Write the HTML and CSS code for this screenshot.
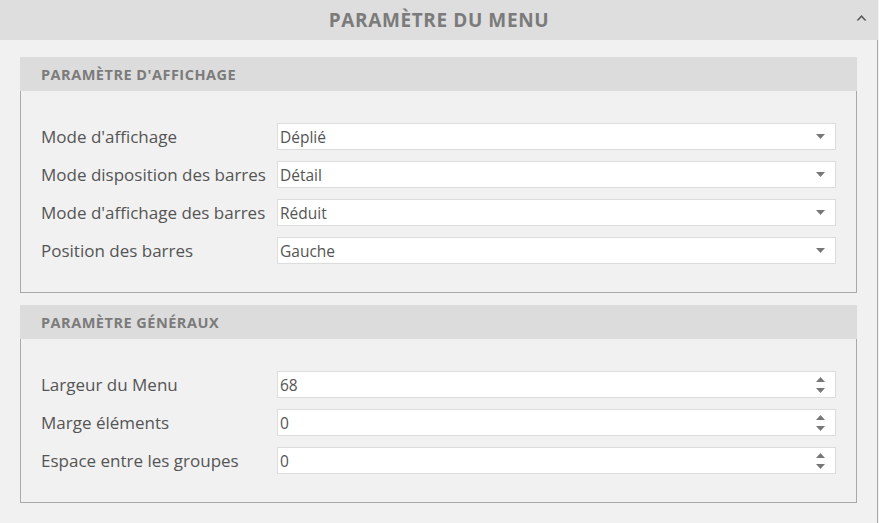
FILE: index.html
```html
<!DOCTYPE html>
<html lang="fr">
<head>
<meta charset="utf-8">
<title>Paramètre du menu</title>
<link rel="stylesheet" href="styles.css">
</head>
<body>
<div class="panel">
  <div class="panel-head">
    <h1 class="panel-title">PARAMÈTRE DU MENU</h1>
    <svg class="collapse" width="11" height="7" viewBox="0 0 11 7"><path d="M0.5 6.5 L5.5 1 L10.5 6.5 L8.5 6.5 L5.5 3.3 L2.5 6.5 Z" fill="#555"/></svg>
  </div>
  <div class="panel-body">
    <section class="group">
      <h2 class="group-title">PARAMÈTRE D'AFFICHAGE</h2>
      <div class="group-body">
        <div class="row">
          <span class="label">Mode d'affichage</span>
          <div class="field"><span class="value">Déplié</span><svg class="caret" width="9" height="5" viewBox="0 0 9 5"><path d="M0 0 H9 L4.5 5 Z" fill="#777"/></svg></div>
        </div>
        <div class="row">
          <span class="label">Mode disposition des barres</span>
          <div class="field"><span class="value">Détail</span><svg class="caret" width="9" height="5" viewBox="0 0 9 5"><path d="M0 0 H9 L4.5 5 Z" fill="#777"/></svg></div>
        </div>
        <div class="row">
          <span class="label">Mode d'affichage des barres</span>
          <div class="field"><span class="value">Réduit</span><svg class="caret" width="9" height="5" viewBox="0 0 9 5"><path d="M0 0 H9 L4.5 5 Z" fill="#777"/></svg></div>
        </div>
        <div class="row">
          <span class="label">Position des barres</span>
          <div class="field"><span class="value">Gauche</span><svg class="caret" width="9" height="5" viewBox="0 0 9 5"><path d="M0 0 H9 L4.5 5 Z" fill="#777"/></svg></div>
        </div>
      </div>
    </section>
    <section class="group">
      <h2 class="group-title">PARAMÈTRE GÉNÉRAUX</h2>
      <div class="group-body">
        <div class="row">
          <span class="label">Largeur du Menu</span>
          <div class="field"><span class="value">68</span><svg class="spin" width="9" height="16" viewBox="0 0 9 16"><path d="M0 5 H9 L4.5 0 Z" fill="#777"/><path d="M0 11 H9 L4.5 16 Z" fill="#777"/></svg></div>
        </div>
        <div class="row">
          <span class="label">Marge éléments</span>
          <div class="field"><span class="value">0</span><svg class="spin" width="9" height="16" viewBox="0 0 9 16"><path d="M0 5 H9 L4.5 0 Z" fill="#777"/><path d="M0 11 H9 L4.5 16 Z" fill="#777"/></svg></div>
        </div>
        <div class="row">
          <span class="label">Espace entre les groupes</span>
          <div class="field"><span class="value">0</span><svg class="spin" width="9" height="16" viewBox="0 0 9 16"><path d="M0 5 H9 L4.5 0 Z" fill="#777"/><path d="M0 11 H9 L4.5 16 Z" fill="#777"/></svg></div>
        </div>
      </div>
    </section>
  </div>
</div>
</body>
</html>
```
FILE: styles.css
```css
html, body {
  margin: 0;
  padding: 0;
  background: #f1f1f1;
}

body {
  font-family: "Open Sans", "Noto Sans", sans-serif;
  color: #555;
}

.panel {
  width: 878px;
}

.panel-head {
  height: 40px;
  background: #dedede;
  display: flex;
  align-items: center;
  justify-content: center;
  position: relative;
}

.panel-title {
  margin: 0;
  font-size: 19px;
  font-weight: 700;
  color: #7b7b7b;
  letter-spacing: 0.6px;
}

.collapse {
  position: absolute;
  right: 11px;
  top: 14px;
}

.panel-body {
  background: #f1f1f1;
  border-right: 1px solid #a9a9a9;
  border-bottom: 1px solid #a9a9a9;
  padding: 17px 20px 20px 20px;
  display: flex;
  flex-direction: column;
  gap: 12px;
}

.group {
  width: 837px;
}

.group-title {
  margin: 0;
  height: 34px;
  display: flex;
  align-items: center;
  padding-left: 21px;
  background: #dcdcdc;
  font-size: 14.5px;
  font-weight: 700;
  color: #7b7b7b;
  letter-spacing: 0.5px;
}

.group-body {
  border: 1px solid #a9a9a9;
  border-top: none;
  padding: 32px 20px 28px 20px;
  display: flex;
  flex-direction: column;
  gap: 11px;
}

.row {
  display: flex;
  align-items: center;
  height: 27px;
}

.label {
  width: 236px;
  font-size: 17px;
  color: #555;
  white-space: nowrap;
}

.field {
  flex: 1;
  height: 25px;
  background: #fff;
  border: 1px solid #dcdcdc;
  display: flex;
  align-items: center;
  justify-content: space-between;
  padding: 0 10px 0 2px;
}

.value {
  font-size: 15.5px;
  color: #555;
}
```
